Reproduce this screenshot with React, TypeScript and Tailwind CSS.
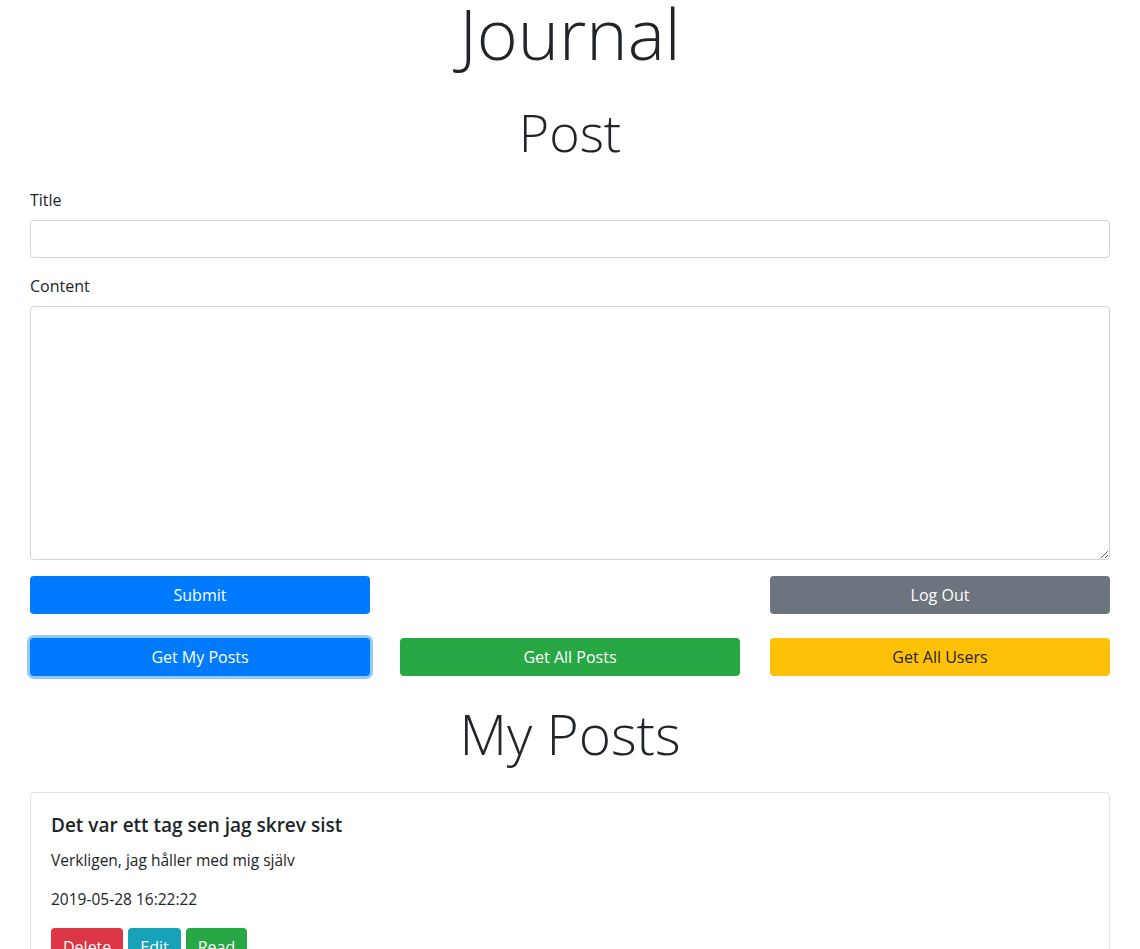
export default function App() {
  const font = { fontFamily: '"Open Sans", "Noto Sans", sans-serif' };

  return (
    <div style={font} className="min-h-screen bg-white text-[#212529] text-base leading-normal">
      <div className="px-[30px]">
        {/* Page headings */}
        <h1 className="text-center text-[70px] font-light leading-[66px] mb-[36px]">Journal</h1>
        <h2 className="text-center text-[52px] font-light leading-[60px] mb-[26px]">Post</h2>

        {/* Form */}
        <form onSubmit={(e) => e.preventDefault()}>
          <div className="mb-4">
            <label className="block mb-2">Title</label>
            <input
              type="text"
              className="block w-full h-[38px] px-3 border border-[#ced4da] rounded-[4px] outline-none"
            />
          </div>
          <div className="mb-4">
            <label className="block mb-2">Content</label>
            <textarea className="block w-full h-[254px] px-3 py-1.5 border border-[#ced4da] rounded-[4px] outline-none" />
          </div>

          <div className="grid grid-cols-3 gap-[30px]">
            <button type="submit" className="h-[38px] rounded-[4px] bg-[#007bff] text-white">Submit</button>
            <div />
            <button type="button" className="h-[38px] rounded-[4px] bg-[#6c757d] text-white">Log Out</button>
          </div>

          <div className="grid grid-cols-3 gap-[30px] mt-6">
            <button type="button" className="h-[38px] rounded-[4px] bg-[#007bff] text-white shadow-[0_0_0_3px_rgba(38,143,255,0.5)]">
              Get My Posts
            </button>
            <button type="button" className="h-[38px] rounded-[4px] bg-[#28a745] text-white">Get All Posts</button>
            <button type="button" className="h-[38px] rounded-[4px] bg-[#ffc107] text-[#212529]">Get All Users</button>
          </div>
        </form>

        <h2 className="text-center text-[55px] font-light leading-[66px] mt-[25px] mb-[25px]">My Posts</h2>

        {/* Post list */}
        <div className="border border-[rgba(0,0,0,0.125)] rounded-[4px] p-5">
          <h5 className="text-[19px] font-semibold leading-[24px] mb-3">Det var ett tag sen jag skrev sist</h5>
          <p className="text-[15.5px] mb-4">Verkligen, jag håller med mig själv</p>
          <p className="text-[15.5px] mb-4">2019-05-28 16:22:22</p>
          <div className="flex gap-[5px]">
            <button className="h-[38px] px-3 rounded-[4px] bg-[#dc3545] text-white">Delete</button>
            <button className="h-[38px] px-3 rounded-[4px] bg-[#17a2b8] text-white">Edit</button>
            <button className="h-[38px] px-3 rounded-[4px] bg-[#28a745] text-white">Read</button>
          </div>
        </div>
      </div>
    </div>
  );
}
